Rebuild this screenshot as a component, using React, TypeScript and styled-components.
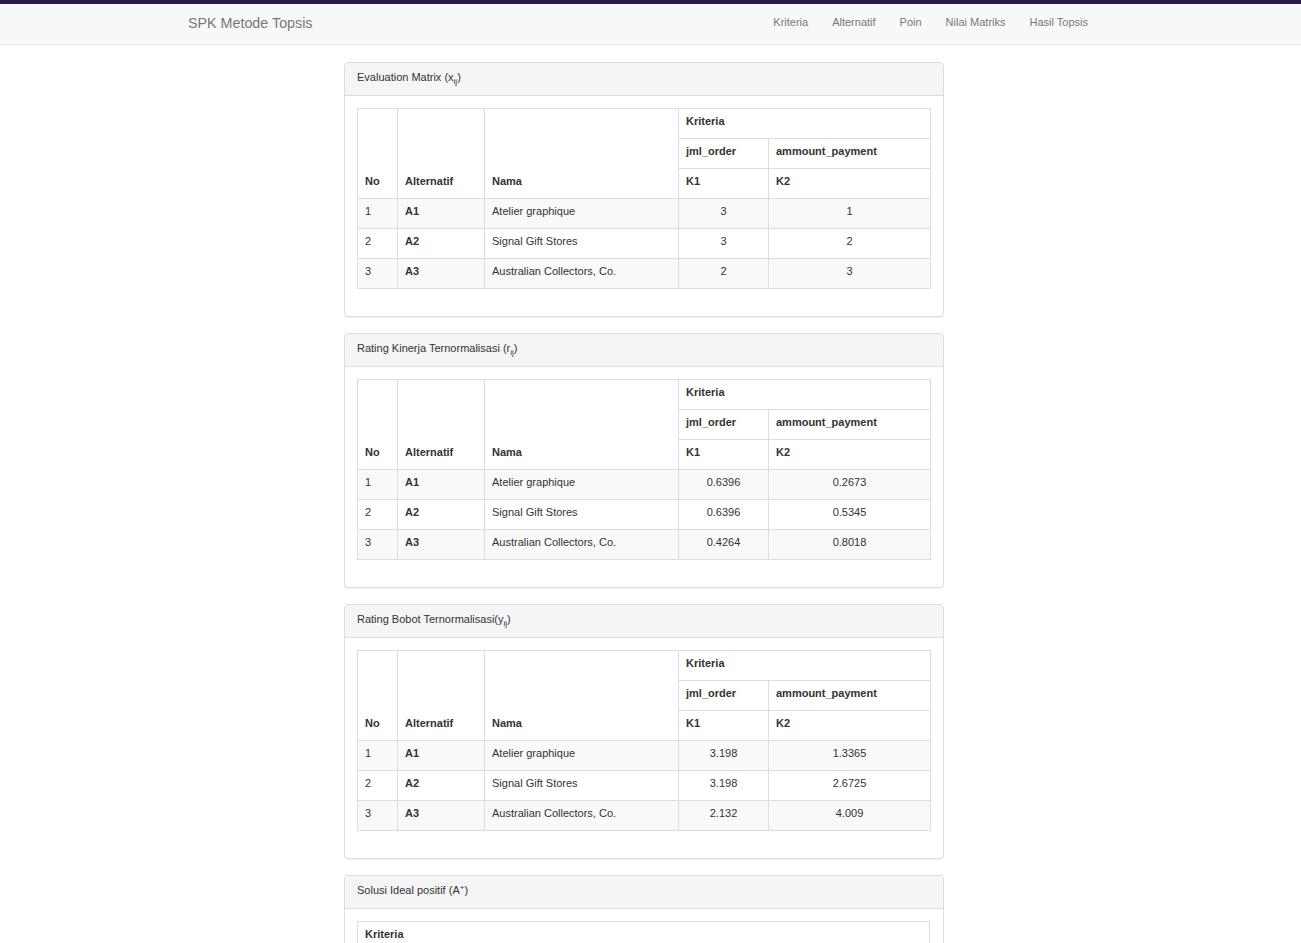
import React from "react";
import styled, { createGlobalStyle } from "styled-components";

const Global = createGlobalStyle`
  html, body { margin: 0; padding: 0; overflow: hidden; background: #fff; }
  body { font-family: "Liberation Sans", Arial, sans-serif; font-size: 11px; color: #333; }
  * { box-sizing: border-box; }
`;

const TopBar = styled.div`
  height: 4px;
  background: #271c4c;
`;

const Navbar = styled.nav`
  height: 41px;
  background: #f8f8f8;
  border-bottom: 1px solid #e7e7e7;
`;

const NavInner = styled.div`
  width: 1286px;
  height: 100%;
  display: flex;
  justify-content: center;
`;

const NavContainer = styled.div`
  width: 940px;
  padding: 0 15px;
  display: flex;
  align-items: center;
  justify-content: space-between;
`;

const Brand = styled.a`
  font-size: 14.3px;
  color: #777;
  text-decoration: none;
  margin-top: -2px;
`;

const NavLinks = styled.ul`
  list-style: none;
  margin: -5px -2px 0 0;
  padding: 0;
  display: flex;
`;

const NavLink = styled.a`
  display: block;
  padding: 0 12px;
  color: #777;
  font-size: 11px;
  text-decoration: none;
`;

const Main = styled.main`
  width: 1288px;
  display: flex;
  flex-direction: column;
  align-items: center;
  padding-top: 17px;
`;

const Panel = styled.section`
  width: 600px;
  border: 1px solid #ddd;
  border-radius: 4px;
  margin-bottom: 16px;
  background: #fff;
  box-shadow: 0 1px 1px rgba(0,0,0,0.05);
`;

const PanelHeading = styled.div`
  height: 33px;
  padding: 0 12px;
  display: flex;
  align-items: center;
  background: #f5f5f5;
  border-bottom: 1px solid #ddd;
  border-radius: 3px 3px 0 0;
  font-size: 11px;
  color: #333;
  & > span { margin-top: -4px; }
`;

const Sub = styled.sub`
  font-size: 8px;
  vertical-align: -3px;
  line-height: 0;
`;

const Sup = styled.sup`
  font-size: 8px;
  vertical-align: 4px;
  line-height: 0;
`;

const PanelBody = styled.div`
  padding: 12px 12px 27px 12px;
`;

const Table = styled.table`
  width: 573px;
  border-collapse: collapse;
  table-layout: fixed;
  font-size: 11px;
`;

const Th = styled.th<{ $bottom?: boolean; $h?: number }>`
  border: 1px solid #ddd;
  padding: 5px 7px 10px 7px;
  height: ${(p) => p.$h ?? 30}px;
  line-height: 14px;
  text-align: left;
  font-weight: bold;
  vertical-align: ${(p) => (p.$bottom ? "bottom" : "middle")};
  color: #333;
`;

const Tr = styled.tr<{ $striped?: boolean }>`
  background: ${(p) => (p.$striped ? "#f9f9f9" : "#fff")};
`;

const Td = styled.td<{ $center?: boolean; $bold?: boolean }>`
  border: 1px solid #ddd;
  padding: 5px 7px 10px 7px;
  height: 30px;
  line-height: 14px;
  text-align: ${(p) => (p.$center ? "center" : "left")};
  font-weight: ${(p) => (p.$bold ? "bold" : "normal")};
  color: #333;
`;

const names = ["Atelier graphique", "Signal Gift Stores", "Australian Collectors, Co."];

type MatrixProps = { values: [string, string][] };

const Matrix: React.FC<MatrixProps> = ({ values }) => (
  <Table>
    <colgroup>
      <col style={{ width: 40 }} />
      <col style={{ width: 87 }} />
      <col style={{ width: 194 }} />
      <col style={{ width: 90 }} />
      <col style={{ width: 162 }} />
    </colgroup>
    <thead>
      <tr>
        <Th rowSpan={3} $bottom>No</Th>
        <Th rowSpan={3} $bottom>Alternatif</Th>
        <Th rowSpan={3} $bottom>Nama</Th>
        <Th colSpan={2}>Kriteria</Th>
      </tr>
      <tr>
        <Th>jml_order</Th>
        <Th>ammount_payment</Th>
      </tr>
      <tr>
        <Th $h={29}>K1</Th>
        <Th $h={29}>K2</Th>
      </tr>
    </thead>
    <tbody>
      {values.map((v, i) => (
        <Tr key={i} $striped={i % 2 === 0}>
          <Td>{i + 1}</Td>
          <Td $bold>A{i + 1}</Td>
          <Td>{names[i]}</Td>
          <Td $center>{v[0]}</Td>
          <Td $center>{v[1]}</Td>
        </Tr>
      ))}
    </tbody>
  </Table>
);

export default function App() {
  return (
    <>
      <Global />
      <TopBar />
      <Navbar>
        <NavInner>
          <NavContainer>
            <Brand href="#">SPK Metode Topsis</Brand>
            <NavLinks>
              {["Kriteria", "Alternatif", "Poin", "Nilai Matriks", "Hasil Topsis"].map((l) => (
                <li key={l}>
                  <NavLink href="#">{l}</NavLink>
                </li>
              ))}
            </NavLinks>
          </NavContainer>
        </NavInner>
      </Navbar>
      <Main>
        <Panel>
          <PanelHeading>
            <span>Evaluation Matrix (x<Sub>ij</Sub>)</span>
          </PanelHeading>
          <PanelBody>
            <Matrix values={[["3", "1"], ["3", "2"], ["2", "3"]]} />
          </PanelBody>
        </Panel>
        <Panel>
          <PanelHeading>
            <span>Rating Kinerja Ternormalisasi (r<Sub>ij</Sub>)</span>
          </PanelHeading>
          <PanelBody>
            <Matrix values={[["0.6396", "0.2673"], ["0.6396", "0.5345"], ["0.4264", "0.8018"]]} />
          </PanelBody>
        </Panel>
        <Panel>
          <PanelHeading>
            <span>Rating Bobot Ternormalisasi(y<Sub>ij</Sub>)</span>
          </PanelHeading>
          <PanelBody>
            <Matrix values={[["3.198", "1.3365"], ["3.198", "2.6725"], ["2.132", "4.009"]]} />
          </PanelBody>
        </Panel>
        <Panel>
          <PanelHeading>
            <span>Solusi Ideal positif (A<Sup>+</Sup>)</span>
          </PanelHeading>
          <PanelBody>
            <Table>
              <thead>
                <tr>
                  <Th colSpan={2}>Kriteria</Th>
                </tr>
                <tr>
                  <Th>jml_order</Th>
                  <Th>ammount_payment</Th>
                </tr>
              </thead>
              <tbody>
                <Tr $striped>
                  <Td>3.198</Td>
                  <Td>4.009</Td>
                </Tr>
              </tbody>
            </Table>
          </PanelBody>
        </Panel>
      </Main>
    </>
  );
}
